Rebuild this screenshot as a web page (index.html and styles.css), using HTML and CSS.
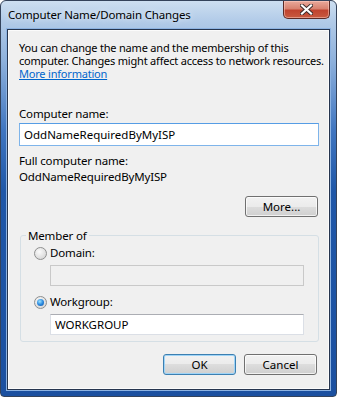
FILE: index.html
```html
<!DOCTYPE html>
<html lang="en">
<head>
    <meta charset="UTF-8">
    <title>Computer Name/Domain Changes</title>
    <link rel="stylesheet" href="styles.css">
</head>
<body>
    <div class="window">
        <div class="titlebar">
            <span class="title">Computer Name/Domain Changes</span>
            <button class="close-btn" type="button">
                <svg width="13" height="11" viewBox="0 0 13 11">
                    <path d="M2 1.5 L11 9.5 M11 1.5 L2 9.5" stroke="#3a2a2a" stroke-width="4" stroke-linecap="square"/>
                    <path d="M2 1.5 L11 9.5 M11 1.5 L2 9.5" stroke="#fff" stroke-width="2.2" stroke-linecap="square"/>
                </svg>
            </button>
        </div>
        <div class="client">
            <p class="intro">You can change the name and the membership of this<br>computer. Changes might affect access to network resources.<br><a href="#">More information</a></p>

            <label class="field-label" for="comp-name">Computer name:</label>
            <input class="textbox focus" type="text" id="comp-name" value="OddNameRequiredByMyISP">

            <div class="full-label">Full computer name:</div>
            <div class="full-value">OddNameRequiredByMyISP</div>

            <div class="more-row">
                <button class="btn" type="button">More...</button>
            </div>

            <fieldset class="member-group">
                <legend>Member of</legend>
                <label class="radio-row"><span class="radio"></span>Domain:</label>
                <input class="textbox sub disabled" type="text" disabled>
                <label class="radio-row workgroup"><span class="radio checked"></span>Workgroup:</label>
                <input class="textbox sub" type="text" value="WORKGROUP">
            </fieldset>

            <div class="actions">
                <button class="btn default" type="button">OK</button>
                <button class="btn" type="button">Cancel</button>
            </div>
        </div>
    </div>
</body>
</html>
```

FILE: styles.css
```css
/* Windows 7 style dialog */
body {
    margin: 0;
    background: #fff;
    font-family: "Noto Sans", "Open Sans", sans-serif;
    font-size: 11.5px;
    letter-spacing: -0.15px;
    color: #000;
}
.window {
    width: 337px;
    height: 397px;
    box-sizing: border-box;
    border: 1px solid #34435b;
    border-radius: 6px 6px 4px 4px;
    padding: 0 6px 6px;
    display: flex;
    flex-direction: column;
    background: linear-gradient(180deg, #cddff1 0, #b2cbe8 20px, #8eb1dc 60px, #3f75c0 130px, #1f57a8 190px, #1b50a0 100%);
}
.titlebar {
    height: 28px;
    display: flex;
    align-items: flex-start;
    flex-shrink: 0;
}
.title {
    padding-left: 1px;
    margin-top: 6px;
    color: #000;
    text-shadow: 0 0 6px rgba(255,255,255,0.9);
}
.close-btn {
    margin-left: auto;
    width: 47px;
    height: 18px;
    padding: 0;
    border: 1px solid #5b2a26;
    border-top: none;
    border-radius: 0 0 5px 5px;
    background: linear-gradient(180deg, #e9a99b 0, #d88270 45%, #c0432f 55%, #c85a40 100%);
    box-shadow: inset 0 0 0 1px rgba(255,210,200,0.5);
    display: flex;
    align-items: center;
    justify-content: center;
}
.client {
    flex: 1;
    border: 1px solid #26354f;
    background: #f0f0f0;
    box-shadow: 0 0 0 1px #8db3e2, inset 0 0 0 1px #fbfbfb;
    padding: 11px 10px 0 11px;
    display: flex;
    flex-direction: column;
}
.intro {
    margin: 0;
    font-size: 11px;
    line-height: 13px;
    white-space: nowrap;
    letter-spacing: -0.2px;
}
.intro a {
    color: #0066cc;
}
.field-label {
    margin-top: 27px;
    line-height: 13px;
}
.textbox {
    display: block;
    box-sizing: border-box;
    width: 300px;
    height: 23px;
    margin: 3px 0 0;
    padding: 0 4px;
    font: inherit;
    color: #000;
    background: #fff;
    border: 1px solid #dbdfe6;
    border-top-color: #abadb3;
    outline: none;
}
.textbox.focus {
    border-color: #7eb4ea;
    border-top-color: #569de5;
}
.full-label {
    margin-top: 8px;
    line-height: 13px;
}
.full-value {
    margin-top: 3px;
    line-height: 13px;
}
.more-row {
    margin-top: 13px;
    display: flex;
    justify-content: flex-end;
    padding-right: 1px;
}
.btn {
    width: 73px;
    height: 21px;
    padding: 0;
    font: inherit;
    color: #000;
    border: 1px solid #707070;
    border-radius: 3px;
    background: linear-gradient(180deg, #f2f2f2 0, #ebebeb 50%, #dddddd 50%, #cfcfcf 100%);
    box-shadow: inset 0 0 0 1px rgba(255,255,255,0.7);
}
.btn.default {
    border-color: #3c7fb1;
    box-shadow: inset 0 0 0 1px #9fd4f7;
}
.member-group {
    margin: 12px 0 0 1px;
    width: 299px;
    box-sizing: border-box;
    height: 113px;
    border: 1px solid #d5dfe5;
    border-radius: 3px;
    padding: 4px 0 0 13px;
}
.member-group legend {
    padding: 0 2px;
    margin-left: -8px;
    line-height: 13px;
}
.radio-row {
    display: flex;
    align-items: center;
    line-height: 14px;
}
.radio-row.workgroup {
    margin-top: 9px;
}
.radio {
    width: 13px;
    height: 13px;
    box-sizing: border-box;
    border-radius: 50%;
    border: 1px solid #8e8f8f;
    background: radial-gradient(circle at 40% 35%, #fbfbfb 0, #e2e2e2 55%, #cfcfcf 100%);
    margin-right: 3px;
    display: flex;
    align-items: center;
    justify-content: center;
}
.radio.checked::after {
    content: "";
    width: 7px;
    height: 7px;
    border-radius: 50%;
    background: radial-gradient(circle at 40% 35%, #9ce3ff 0, #2c8be0 50%, #0b4fa1 100%);
}
.textbox.sub {
    width: 254px;
    height: 21px;
    margin: 5px 0 0 16px;
}
.textbox.disabled {
    background: #f0f0f0;
    border-color: #c9c9c9;
}
.actions {
    margin-top: 12px;
    display: flex;
    justify-content: flex-end;
    gap: 8px;
    padding-right: 2px;
}
```
